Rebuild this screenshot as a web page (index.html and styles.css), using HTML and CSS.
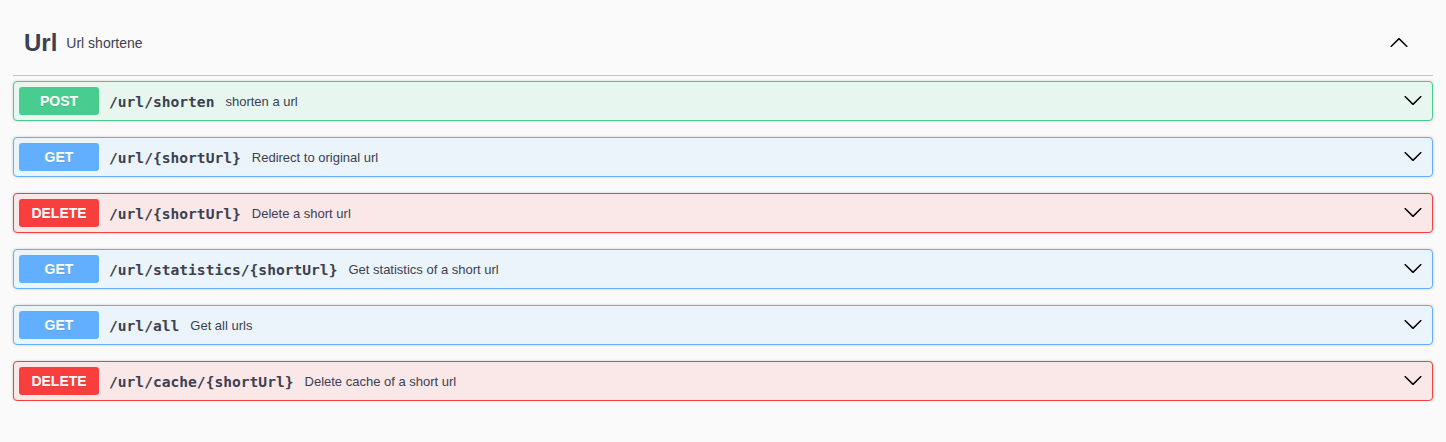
FILE: index.html
```html
<!DOCTYPE html>
<html lang="en">
<head>
<meta charset="utf-8">
<title>Url</title>
<link rel="stylesheet" href="styles.css">
</head>
<body>
<div class="wrapper">
  <section class="tag-section">
    <h3 class="tag">
      <span class="tag-name">Url</span>
      <small class="tag-desc">Url shortene</small>
      <button class="tag-toggle" aria-label="Collapse">
        <svg class="arrow" width="20" height="20" viewBox="0 0 20 20"><path d="M17.418 14.908c.272.268.709.268.979 0s.271-.701 0-.969l-7.908-7.83c-.27-.268-.707-.268-.979 0l-7.908 7.83c-.27.268-.27.701 0 .969.271.268.709.268.979 0L10 7.767l7.418 7.141z"/></svg>
      </button>
    </h3>
    <div class="ops">
      <div class="op op-post">
        <span class="method">POST</span>
        <span class="path">/url/shorten</span>
        <span class="desc">shorten a url</span>
        <svg class="arrow op-arrow" width="20" height="20" viewBox="0 0 20 20"><path d="M17.418 6.109c.272-.268.709-.268.979 0s.271.701 0 .969l-7.908 7.83c-.27.268-.707.268-.979 0l-7.908-7.83c-.27-.268-.27-.701 0-.969.271-.268.709-.268.979 0L10 13.25l7.418-7.141z"/></svg>
      </div>
      <div class="op op-get">
        <span class="method">GET</span>
        <span class="path">/url/{shortUrl}</span>
        <span class="desc">Redirect to original url</span>
        <svg class="arrow op-arrow" width="20" height="20" viewBox="0 0 20 20"><path d="M17.418 6.109c.272-.268.709-.268.979 0s.271.701 0 .969l-7.908 7.83c-.27.268-.707.268-.979 0l-7.908-7.83c-.27-.268-.27-.701 0-.969.271-.268.709-.268.979 0L10 13.25l7.418-7.141z"/></svg>
      </div>
      <div class="op op-delete">
        <span class="method">DELETE</span>
        <span class="path">/url/{shortUrl}</span>
        <span class="desc">Delete a short url</span>
        <svg class="arrow op-arrow" width="20" height="20" viewBox="0 0 20 20"><path d="M17.418 6.109c.272-.268.709-.268.979 0s.271.701 0 .969l-7.908 7.83c-.27.268-.707.268-.979 0l-7.908-7.83c-.27-.268-.27-.701 0-.969.271-.268.709-.268.979 0L10 13.25l7.418-7.141z"/></svg>
      </div>
      <div class="op op-get">
        <span class="method">GET</span>
        <span class="path">/url/statistics/{shortUrl}</span>
        <span class="desc">Get statistics of a short url</span>
        <svg class="arrow op-arrow" width="20" height="20" viewBox="0 0 20 20"><path d="M17.418 6.109c.272-.268.709-.268.979 0s.271.701 0 .969l-7.908 7.83c-.27.268-.707.268-.979 0l-7.908-7.83c-.27-.268-.27-.701 0-.969.271-.268.709-.268.979 0L10 13.25l7.418-7.141z"/></svg>
      </div>
      <div class="op op-get">
        <span class="method">GET</span>
        <span class="path">/url/all</span>
        <span class="desc">Get all urls</span>
        <svg class="arrow op-arrow" width="20" height="20" viewBox="0 0 20 20"><path d="M17.418 6.109c.272-.268.709-.268.979 0s.271.701 0 .969l-7.908 7.83c-.27.268-.707.268-.979 0l-7.908-7.83c-.27-.268-.27-.701 0-.969.271-.268.709-.268.979 0L10 13.25l7.418-7.141z"/></svg>
      </div>
      <div class="op op-delete">
        <span class="method">DELETE</span>
        <span class="path">/url/cache/{shortUrl}</span>
        <span class="desc">Delete cache of a short url</span>
        <svg class="arrow op-arrow" width="20" height="20" viewBox="0 0 20 20"><path d="M17.418 6.109c.272-.268.709-.268.979 0s.271.701 0 .969l-7.908 7.83c-.27.268-.707.268-.979 0l-7.908-7.83c-.27-.268-.27-.701 0-.969.271-.268.709-.268.979 0L10 13.25l7.418-7.141z"/></svg>
      </div>
    </div>
  </section>
</div>
</body>
</html>
```

FILE: styles.css
```css
* { box-sizing: border-box; }

html, body {
  margin: 0;
  padding: 0;
  background: #fafafa;
  font-family: "Liberation Sans", Arial, sans-serif;
  color: #3b4151;
}

.wrapper {
  padding: 11px 13px 0 13px;
}

.tag-section {
  display: flex;
  flex-direction: column;
}

.tag {
  display: flex;
  align-items: center;
  margin: 0 0 5px;
  padding: 10px 20px 10px 11px;
  min-height: 65px;
  border-bottom: 1px solid rgba(59, 65, 81, 0.3);
  font-size: 24px;
  font-weight: 700;
  color: #3b4151;
}

.tag-name {
  line-height: 28px;
}

.tag-desc {
  flex: 1;
  padding: 0 9px;
  font-size: 14px;
  font-weight: 400;
  color: #3b4151;
}

.tag-toggle {
  display: flex;
  align-items: center;
  justify-content: center;
  background: none;
  border: none;
  padding: 0;
  margin: 0 4px 2px 0;
  cursor: pointer;
}

.arrow {
  display: block;
  fill: #000;
}

.ops {
  display: flex;
  flex-direction: column;
  gap: 16px;
}

.op {
  display: flex;
  align-items: center;
  height: 40px;
  padding: 5px;
  border: 1px solid;
  border-radius: 4px;
  box-shadow: 0 0 3px rgba(0, 0, 0, 0.19);
}

.op-post { background: #e8f6f0; border-color: #49cc90; }
.op-get { background: #ebf3fb; border-color: #61affe; }
.op-delete { background: #fae7e7; border-color: #f93e3e; }

.method {
  min-width: 80px;
  height: 28px;
  line-height: 28px;
  border-radius: 3px;
  text-align: center;
  font-size: 14px;
  font-weight: 700;
  color: #fff;
  text-shadow: 0 1px 0 rgba(0, 0, 0, 0.1);
}

.op-post .method { background: #49cc90; }
.op-get .method { background: #61affe; }
.op-delete .method { background: #f93e3e; }

.path {
  padding: 0 11px 0 10px;
  font-family: "DejaVu Sans Mono", "Liberation Mono", monospace;
  font-size: 14.6px;
  font-weight: 700;
  color: #3b4151;
}

.desc {
  flex: 1 1 auto;
  font-size: 13px;
  color: #3b4151;
}

.op-arrow {
  margin: 0 4px 2px 0;
}
```
